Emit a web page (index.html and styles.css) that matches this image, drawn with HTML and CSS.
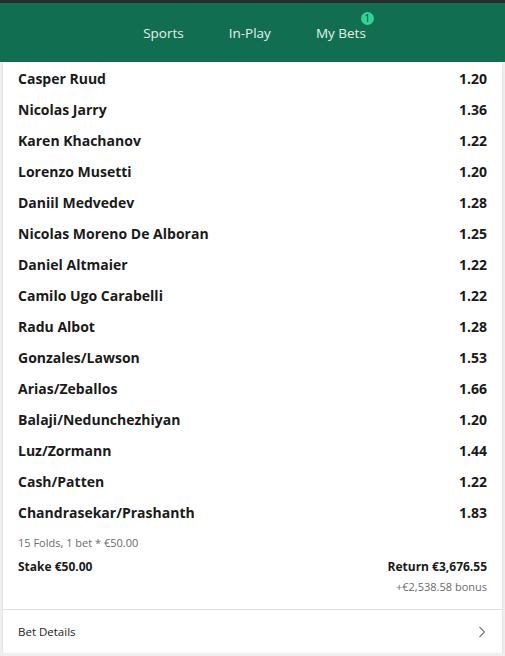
FILE: index.html
```html
<!DOCTYPE html>
<html lang="en">
<head>
  <meta charset="UTF-8" />
  <meta name="viewport" content="width=device-width, initial-scale=1.0"/>
  <title>My Bets</title>
  <link rel="stylesheet" href="styles.css">
</head>
<body>
  <div class="topbar"></div>
  <nav class="nav">
    <a class="nav-item">Sports</a>
    <a class="nav-item">In-Play</a>
    <a class="nav-item">My Bets<span class="badge">1</span></a>
  </nav>

  <div class="card">
    <ul class="legs">
      <li><span class="name">Casper Ruud</span><span class="odds">1.20</span></li>
      <li><span class="name">Nicolas Jarry</span><span class="odds">1.36</span></li>
      <li><span class="name">Karen Khachanov</span><span class="odds">1.22</span></li>
      <li><span class="name">Lorenzo Musetti</span><span class="odds">1.20</span></li>
      <li><span class="name">Daniil Medvedev</span><span class="odds">1.28</span></li>
      <li><span class="name">Nicolas Moreno De Alboran</span><span class="odds">1.25</span></li>
      <li><span class="name">Daniel Altmaier</span><span class="odds">1.22</span></li>
      <li><span class="name">Camilo Ugo Carabelli</span><span class="odds">1.22</span></li>
      <li><span class="name">Radu Albot</span><span class="odds">1.28</span></li>
      <li><span class="name">Gonzales/Lawson</span><span class="odds">1.53</span></li>
      <li><span class="name">Arias/Zeballos</span><span class="odds">1.66</span></li>
      <li><span class="name">Balaji/Nedunchezhiyan</span><span class="odds">1.20</span></li>
      <li><span class="name">Luz/Zormann</span><span class="odds">1.44</span></li>
      <li><span class="name">Cash/Patten</span><span class="odds">1.22</span></li>
      <li><span class="name">Chandrasekar/Prashanth</span><span class="odds">1.83</span></li>
    </ul>

    <div class="summary">
      <div class="bet-type">15 Folds, 1 bet * €50.00</div>
      <div class="totals">
        <div class="stake">Stake €50.00</div>
        <div class="return">
          <div class="return-amount">Return €3,676.55</div>
          <div class="bonus">+€2,538.58 bonus</div>
        </div>
      </div>
    </div>

    <div class="details">
      <span>Bet Details</span>
      <svg class="chevron" width="8" height="12" viewBox="0 0 8 12">
        <path d="M1.5 1 L6.5 6 L1.5 11" fill="none" stroke="#777" stroke-width="1.1"/>
      </svg>
    </div>
  </div>
</body>
</html>
```

FILE: styles.css
```css
body {
  margin: 0;
  font-family: "Open Sans", Arial, sans-serif;
  background: #efefef;
  color: #1a1a1a;
}
.topbar {
  height: 3px;
  background: #2b2b2b;
}
.nav {
  height: 59px;
  background: #126e51;
  display: flex;
  justify-content: center;
  align-items: center;
  gap: 45px;
  padding-left: 4px;
}
.nav-item {
  position: relative;
  color: #e4f1eb;
  font-size: 13.5px;
}
.badge {
  position: absolute;
  top: -12px;
  right: -8px;
  width: 13px;
  height: 13px;
  border-radius: 50%;
  background: #31d396;
  color: #0d4a36;
  font-size: 10px;
  line-height: 13px;
  text-align: center;
}
.card {
  background: #fff;
  margin: 0 3px;
  box-shadow: 0 1px 2px rgba(0,0,0,0.12);
  height: 591px;
  display: flex;
  flex-direction: column;
}
.legs {
  list-style: none;
  margin: 0;
  padding: 1px 15px 0;
}
.legs li {
  display: flex;
  justify-content: space-between;
  align-items: center;
  height: 31px;
  font-size: 14px;
  font-weight: 700;
}
.summary {
  padding: 7px 15px 0;
  height: 74px;
}
.bet-type {
  font-size: 11px;
  color: #6b6b6b;
}
.totals {
  display: flex;
  justify-content: space-between;
  margin-top: 8px;
}
.stake,
.return-amount {
  font-size: 12px;
  font-weight: 700;
}
.return {
  text-align: right;
}
.bonus {
  font-size: 11px;
  color: #6b6b6b;
  margin-top: 4px;
}
.details {
  border-top: 1px solid #e2e2e2;
  flex: 1;
  display: flex;
  justify-content: space-between;
  align-items: center;
  padding: 0 16px 0 15px;
  font-size: 11.5px;
  color: #222;
}
```
